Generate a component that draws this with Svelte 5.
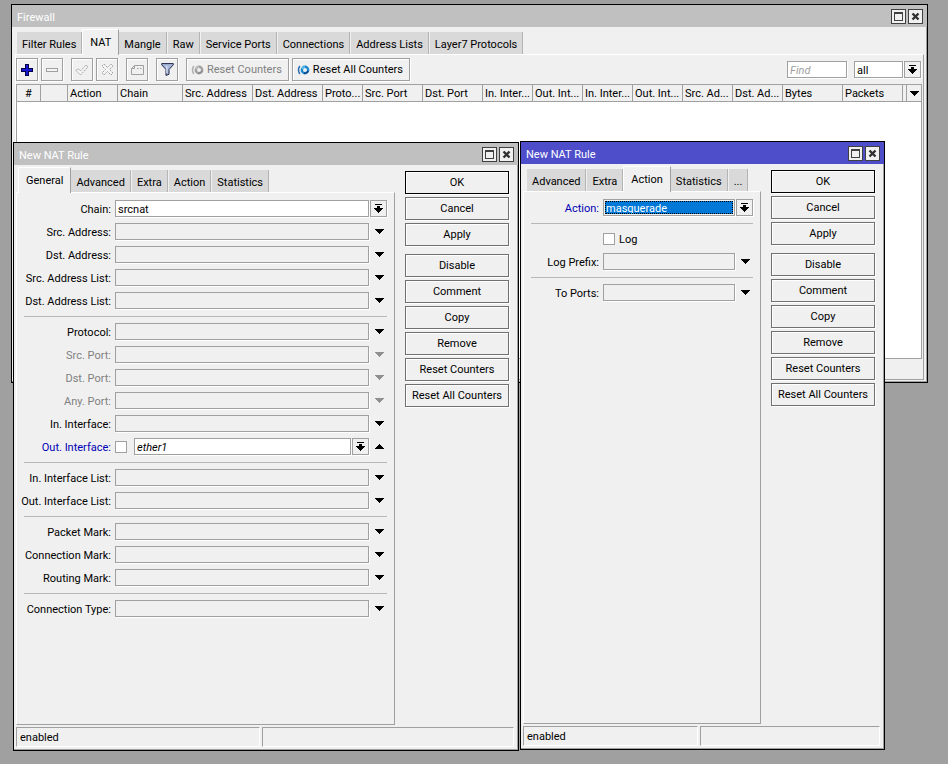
<script lang="ts">
  type Column = { name: string; width: number };
  type Field = {
    label: string;
    kind: "text" | "select" | "interface" | "check" | "line";
    value?: string;
    disabled?: boolean;
    changed?: boolean;
    selected?: boolean;
  };

  const firewallTabs = ["Filter Rules", "NAT", "Mangle", "Raw", "Service Ports", "Connections", "Address Lists", "Layer7 Protocols"];

  const columns: Column[] = [
    { name: "#", width: 24 },
    { name: "", width: 27 },
    { name: "Action", width: 50 },
    { name: "Chain", width: 65 },
    { name: "Src. Address", width: 70 },
    { name: "Dst. Address", width: 70 },
    { name: "Proto...", width: 40 },
    { name: "Src. Port", width: 60 },
    { name: "Dst. Port", width: 60 },
    { name: "In. Inter...", width: 50 },
    { name: "Out. Int...", width: 50 },
    { name: "In. Inter...", width: 50 },
    { name: "Out. Int...", width: 50 },
    { name: "Src. Ad...", width: 50 },
    { name: "Dst. Ad...", width: 50 },
    { name: "Bytes", width: 60 },
    { name: "Packets", width: 60 },
  ];

  const line: Field = { label: "", kind: "line" };

  const generalFields: Field[] = [
    { label: "Chain", kind: "select", value: "srcnat" },
    { label: "Src. Address", kind: "text" },
    { label: "Dst. Address", kind: "text" },
    { label: "Src. Address List", kind: "text" },
    { label: "Dst. Address List", kind: "text" },
    line,
    { label: "Protocol", kind: "text" },
    { label: "Src. Port", kind: "text", disabled: true },
    { label: "Dst. Port", kind: "text", disabled: true },
    { label: "Any. Port", kind: "text", disabled: true },
    { label: "In. Interface", kind: "text" },
    { label: "Out. Interface", kind: "interface", value: "ether1", changed: true },
    line,
    { label: "In. Interface List", kind: "text" },
    { label: "Out. Interface List", kind: "text" },
    line,
    { label: "Packet Mark", kind: "text" },
    { label: "Connection Mark", kind: "text" },
    { label: "Routing Mark", kind: "text" },
    line,
    { label: "Connection Type", kind: "text" },
  ];

  const actionFields: Field[] = [
    { label: "Action", kind: "select", value: "masquerade", changed: true, selected: true },
    line,
    { label: "Log", kind: "check" },
    { label: "Log Prefix", kind: "text" },
    line,
    { label: "To Ports", kind: "text" },
  ];

  const sideButtons = ["OK", "Cancel", "Apply", "Disable", "Comment", "Copy", "Remove", "Reset Counters", "Reset All Counters"];

  let firewallTab = $state("NAT");
  let generalTab = $state("General");
  let actionTab = $state("Action");
</script>

{#snippet titleBar(title: string)}
  <header class="title-bar">
    <h2>{title}</h2>
    <button class="title-button" aria-label="Maximize">
      <svg width="9" height="9" viewBox="0 0 9 9" shape-rendering="crispEdges">
        <path d="M0 0h9v9H0zM1 2v6h7V2z" fill="#404040" fill-rule="evenodd" />
      </svg>
    </button>
    <button class="title-button" aria-label="Close">
      <svg width="9" height="9" viewBox="0 0 9 9">
        <path d="M1.5 1.5l6 6M7.5 1.5l-6 6" stroke="#303030" stroke-width="2.4" />
      </svg>
    </button>
  </header>
{/snippet}

{#snippet tabBar(names: string[], current: string, pick: (name: string) => void)}
  <div class="tabs" role="tablist">
    {#each names as name}
      <button class="tab" class:active={name === current} role="tab" aria-selected={name === current} onclick={() => pick(name)}>{name}</button>
    {/each}
  </div>
{/snippet}

{#snippet dropIcon()}
  <svg width="9" height="9" viewBox="0 0 9 9" shape-rendering="crispEdges">
    <path d="M1 0h7v1H1zM3 2h3v2h3v1H8v1H7v1H6v1H5v1H4V8H3V7H2V6H1V5H0V4h3z" fill="#000" />
  </svg>
{/snippet}

{#snippet arrow(up = false)}
  <svg width="9" height="5" viewBox="0 0 9 5" shape-rendering="crispEdges">
    {#if up}
      <path d="M4 0h1v1h1v1h1v1h1v1h1v1H0V4h1V3h1V2h1V1h1z" fill="currentColor" />
    {:else}
      <path d="M0 0h9v1H8v1H7v1H6v1H5v1H4V4H3V3H2V2H1V1H0z" fill="currentColor" />
    {/if}
  </svg>
{/snippet}

{#snippet counterIcon(dim: boolean)}
  <svg width="13" height="10" viewBox="0 0 13 10" fill="none">
    <path d="M2.8 1Q0.2 5 2.8 9" stroke={dim ? "#b0b0b0" : "#2a6fb0"} stroke-width="1.5" />
    <circle cx="8" cy="5" r="3.2" stroke={dim ? "#a0a0a0" : "#1c86cc"} stroke-width="2.4" />
    <path d="M5 4Q6 2 8 1.8" stroke={dim ? "#c4c4c4" : "#5cc8f0"} stroke-width="1.6" />
    <path d="M11 6Q10 8.4 7 8.3" stroke={dim ? "#8c8c8c" : "#123f88"} stroke-width="1.4" />
  </svg>
{/snippet}

{#snippet form(prefix: string, fields: Field[])}
  <form class="fields" onsubmit={(e) => e.preventDefault()}>
    {#each fields as field, i}
      {@const id = `${prefix}-${i}`}
      {#if field.kind === "line"}
        <hr />
      {:else if field.kind === "check"}
        <div class="row">
          <span class="label"></span>
          <input {id} type="checkbox" />
          <label class="check-label" for={id}>{field.label}</label>
        </div>
      {:else}
        <div class="row" class:disabled={field.disabled} class:changed={field.changed}>
          <label class="label" for={id}>{field.label}:</label>
          {#if field.kind === "select"}
            <select {id} class="box filled" class:selected={field.selected}>
              <option>{field.value}</option>
            </select>
            <button class="drop" aria-label="Choose {field.label}">{@render dropIcon()}</button>
          {:else if field.kind === "interface"}
            <input class="negate" type="checkbox" aria-label="Not" />
            <select {id} class="box filled italic">
              <option>{field.value}</option>
            </select>
            <button class="drop" aria-label="Choose {field.label}">{@render dropIcon()}</button>
            <button class="expand" aria-label="Collapse {field.label}">{@render arrow(true)}</button>
          {:else}
            <input {id} class="box" type="text" disabled={field.disabled} />
            <button class="expand" aria-label="Expand {field.label}" disabled={field.disabled}>{@render arrow()}</button>
          {/if}
        </div>
      {/if}
    {/each}
  </form>
{/snippet}

{#snippet ruleBody(prefix: string, names: string[], current: string, pick: (name: string) => void, fields: Field[])}
  <div class="rule-body">
    <div class="rule-main">
      {@render tabBar(names, current, pick)}
      <div class="panel">
        {@render form(prefix, fields)}
      </div>
    </div>
    <div class="side">
      {#each sideButtons as name}
        <button class="side-button">{name}</button>
      {/each}
    </div>
  </div>
  <footer class="status">
    <span class="state">enabled</span>
    <span></span>
  </footer>
{/snippet}

<main class="desktop">
  <section class="window firewall">
    {@render titleBar("Firewall")}
    <div class="firewall-body">
      {@render tabBar(firewallTabs, firewallTab, (name) => (firewallTab = name))}
      <div class="panel list-panel">
        <div class="toolbar">
          <div class="group">
            <button class="tool" aria-label="Add">
              <svg width="12" height="12" viewBox="0 0 12 12" shape-rendering="crispEdges">
                <path d="M4 0h4v4h4v4H8v4H4V8H0V4h4z" fill="#000048" />
                <path d="M5 1h2v4h4v2H7v4H5V7H1V5h4z" fill="#1818d0" />
              </svg>
            </button>
            <button class="tool" aria-label="Remove">
              <svg width="12" height="4" viewBox="0 0 12 4" shape-rendering="crispEdges">
                <path d="M.5.5h11v3H.5z" fill="#f4f4f4" stroke="#a0a0a0" />
              </svg>
            </button>
          </div>
          <div class="group">
            <button class="tool" aria-label="Enable">
              <svg width="14" height="12" viewBox="0 0 14 12">
                <path d="M1 6.5l2-2 2.5 2.5L11 1l2 1.8L5.5 11z" fill="#f4f4f4" stroke="#a0a0a0" stroke-dasharray="2 1" />
              </svg>
            </button>
            <button class="tool" aria-label="Disable">
              <svg width="13" height="13" viewBox="0 0 13 13">
                <path d="M3 1l3.5 3.5L10 1l2 2-3.5 3.5L12 10l-2 2-3.5-3.5L3 12l-2-2 3.5-3.5L1 3z" fill="#f4f4f4" stroke="#a0a0a0" stroke-dasharray="2 1" />
              </svg>
            </button>
          </div>
          <div class="group">
            <button class="tool" aria-label="Comment">
              <svg width="13" height="10" viewBox="0 0 13 10" fill="none" stroke="#a0a0a0">
                <path d="M3.5.5h9v9H.5v-6z" />
                <path d="M3.5 1v2.500H1M6 3.500h1.500M9 3.500h1.500" />
              </svg>
            </button>
          </div>
          <div class="group">
            <button class="tool" aria-label="Filter">
              <svg width="13" height="13" viewBox="0 0 13 13">
                <path d="M.7.6h11.6v1.2L8 6.5v4.700l-3 1.300v-6L.7 1.800z" fill="#a9b9dc" stroke="#202848" />
                <path d="M5.800 3v7" stroke="#e6ecf8" />
              </svg>
            </button>
          </div>
          <div class="group">
            <button class="tool wide dim">{@render counterIcon(true)}Reset Counters</button>
            <button class="tool wide">{@render counterIcon(false)}Reset All Counters</button>
          </div>
          <div class="search">
            <input class="box filled find" type="text" placeholder="Find" aria-label="Find" />
            <select class="box filled chain" aria-label="Chain filter">
              <option>all</option>
            </select>
            <button class="drop" aria-label="Choose chain">{@render dropIcon()}</button>
          </div>
        </div>
        <div class="list">
          <table>
            <colgroup>
              {#each columns as column}
                <col style="width: {column.width}px" />
              {/each}
              <col class="spare" />
              <col />
            </colgroup>
            <thead>
              <tr>
                {#each columns as column}
                  <th class:number={column.name === "#"}>{column.name}</th>
                {/each}
                <th></th>
                <th class="menu"><button aria-label="Columns">{@render arrow()}</button></th>
              </tr>
            </thead>
          </table>
        </div>
      </div>
    </div>
  </section>

  <section class="window general">
    {@render titleBar("New NAT Rule")}
    {@render ruleBody("general", ["General", "Advanced", "Extra", "Action", "Statistics"], generalTab, (name) => (generalTab = name), generalFields)}
  </section>

  <section class="window action">
    {@render titleBar("New NAT Rule")}
    {@render ruleBody("action", ["Advanced", "Extra", "Action", "Statistics", "..."], actionTab, (name) => (actionTab = name), actionFields)}
  </section>
</main>

<style>
  :global(body) {
    margin: 0;
    background: #a0a0a0;
  }

  .desktop {
    position: relative;
    min-height: 100vh;
    overflow: hidden;
    background: #a0a0a0;
    color: #000;
    font-family: Roboto, "Liberation Sans", sans-serif;
    font-size: 11px;
    line-height: 13px;
  }

  .desktop * {
    box-sizing: border-box;
  }

  button,
  input,
  select {
    margin: 0;
    padding: 0;
    border: 0;
    border-radius: 0;
    background: none;
    color: inherit;
    font: inherit;
  }

  button {
    display: flex;
    align-items: center;
    justify-content: center;
    white-space: nowrap;
  }

  svg {
    flex: none;
    display: block;
  }

  /* Windows */
  .window {
    position: absolute;
    display: flex;
    flex-direction: column;
    border: 1px solid #000;
    background: #f0f0f0;
    box-shadow: inset -1px -1px #a0a0a0;
  }

  .firewall {
    top: 4px;
    left: 11px;
    right: 20px;
    min-height: 379px;
  }

  .general {
    top: 142px;
    left: 13px;
    width: 506px;
    min-height: 609px;
    --label-width: 87px;
  }

  .action {
    top: 141px;
    left: 520px;
    width: 365px;
    min-height: 609px;
    --label-width: 68px;
  }

  .title-bar {
    display: flex;
    align-items: center;
    gap: 2px;
    height: 22px;
    padding: 0 4px 0 5px;
    background: #c0c0c0;
    color: #fff;
  }

  .action .title-bar {
    background: #4e4ecb;
  }

  .title-bar h2 {
    flex: 1;
    margin: 0;
    padding-top: 3px;
    font-size: 11px;
    font-weight: normal;
  }

  .title-button {
    width: 15px;
    height: 15px;
    border: 1px solid #404040;
    background: #f0f0f0;
  }

  /* Tabs */
  .tabs {
    display: flex;
    align-items: flex-end;
    height: 27px;
    padding-left: 2px;
  }

  .action .tabs {
    padding-left: 4px;
  }

  .tab {
    height: 22px;
    margin-right: 1px;
    padding: 2px 5px 0;
    border-right: 1px solid #b4b4b4;
    background: #d9d9d9;
  }

  .tab.active {
    position: relative;
    height: 26px;
    margin: 0 0 -1px -1px;
    padding: 0 7px;
    border: solid #fff;
    border-width: 1px 0 0 1px;
    border-right: 1px solid #a0a0a0;
    background: #f0f0f0;
  }

  .tab.active:first-child {
    margin-left: 0;
  }

  .panel {
    flex: 1;
    display: flex;
    flex-direction: column;
    border: 1px solid #a0a0a0;
    border-top-color: #fff;
    border-left-color: #fff;
  }

  /* Firewall list */
  .firewall-body {
    flex: 1;
    display: flex;
    flex-direction: column;
    padding: 0 3px 2px;
  }

  .list-panel {
    padding: 3px 1px 0 0;
  }

  .toolbar {
    display: flex;
    gap: 8px;
    margin-bottom: 3px;
  }

  .group {
    display: flex;
    gap: 3px;
  }

  .tool {
    width: 22px;
    height: 23px;
    border: 1px solid #a0a0a0;
    box-shadow: inset 1px 1px #fff, 1px 1px #fff;
  }

  .tool.wide {
    gap: 3px;
    width: auto;
    padding: 0 6px 0 4px;
  }

  .dim {
    color: #808080;
  }

  .search {
    display: flex;
    align-items: center;
    gap: 1px;
    margin: 0 1px 0 auto;
  }

  .toolbar .find {
    flex: none;
    width: 60px;
    margin-right: 6px;
  }

  .toolbar .chain {
    flex: none;
    width: 49px;
  }

  .find::placeholder {
    color: #a0a0a0;
    font-style: italic;
    opacity: 1;
  }

  .list {
    flex: 1;
    margin-bottom: 20px;
    border: 1px solid #a0a0a0;
    border-width: 0 1px 1px;
    background: #fff;
  }

  table {
    width: 100%;
    table-layout: fixed;
    border-collapse: separate;
    border-spacing: 0;
  }

  .spare {
    width: 4px;
  }

  th {
    height: 18px;
    padding: 1px 0 0 2px;
    overflow: hidden;
    border: 1px solid #a0a0a0;
    border-left-width: 0;
    background: #f0f0f0;
    font-weight: normal;
    text-align: left;
    white-space: nowrap;
  }

  th.number {
    padding: 0;
    text-align: center;
  }

  th.menu {
    padding: 0;
    border-right: 0;
  }

  th.menu button {
    width: 100%;
  }

  /* Rule dialogs */
  .rule-body {
    flex: 1;
    display: flex;
    padding: 0 9px 0 2px;
  }

  .rule-main {
    flex: 1;
    display: flex;
    flex-direction: column;
    min-width: 0;
  }

  .side {
    flex: none;
    display: flex;
    flex-direction: column;
    gap: 3px;
    width: 104px;
    margin: 6px 0 0 10px;
  }

  .side-button {
    height: 23px;
    border: 1px solid #707070;
    box-shadow: inset 1px 1px #fff, 1px 1px #fff;
  }

  .side-button:first-child {
    border-color: #000;
  }

  .side-button:nth-child(4) {
    margin-top: 5px;
  }

  .fields {
    display: flex;
    flex-direction: column;
    gap: 6px;
    padding: 7px;
  }

  hr {
    width: 100%;
    margin: 1px 0 0;
    border: 0;
    border-top: 1px solid #b8b8b8;
  }

  .row {
    display: flex;
    align-items: center;
    gap: 1px;
    height: 17px;
  }

  .label {
    flex: none;
    display: flex;
    justify-content: flex-end;
    width: var(--label-width);
    margin-right: 3px;
    padding-top: 1px;
    white-space: nowrap;
  }

  .changed .label {
    color: #0000b4;
  }

  .disabled {
    color: #808080;
  }

  .box {
    flex: 1;
    min-width: 0;
    height: 17px;
    padding: 1px 2px 0;
    appearance: none;
    border: 1px solid #a0a0a0;
    box-shadow: 1px 1px #fff;
  }

  .filled {
    background: #fff;
  }

  .italic {
    font-style: italic;
  }

  .selected {
    outline: 1px dotted #000;
    outline-offset: -3px;
    background: #0078d7;
    box-shadow: inset 0 0 0 1px #f0f0f0, 1px 1px #fff;
    color: #fff;
  }

  .drop {
    flex: none;
    width: 17px;
    height: 17px;
    border: 1px solid #a0a0a0;
    box-shadow: 1px 1px #fff;
  }

  .expand {
    flex: none;
    width: 17px;
    height: 17px;
    padding-left: 2px;
  }

  .expand:disabled {
    color: #909090;
  }

  input[type="checkbox"] {
    flex: none;
    width: 12px;
    height: 12px;
    appearance: none;
    border: 1px solid #a0a0a0;
    background: #fff;
  }

  input[type="checkbox"]:checked {
    background: #404040;
    box-shadow: inset 0 0 0 2px #fff;
  }

  input.negate {
    margin-right: 6px;
  }

  .check-label {
    margin-left: 3px;
    padding-top: 1px;
  }

  .status {
    display: flex;
    gap: 2px;
    margin: 2px 4px 3px 2px;
  }

  .status span {
    flex: 1;
    height: 20px;
    padding: 3px;
    border: 1px solid #fff;
    border-top-color: #a0a0a0;
    border-left-color: #a0a0a0;
  }

  .status .state {
    flex: none;
    width: 49%;
  }
</style>
